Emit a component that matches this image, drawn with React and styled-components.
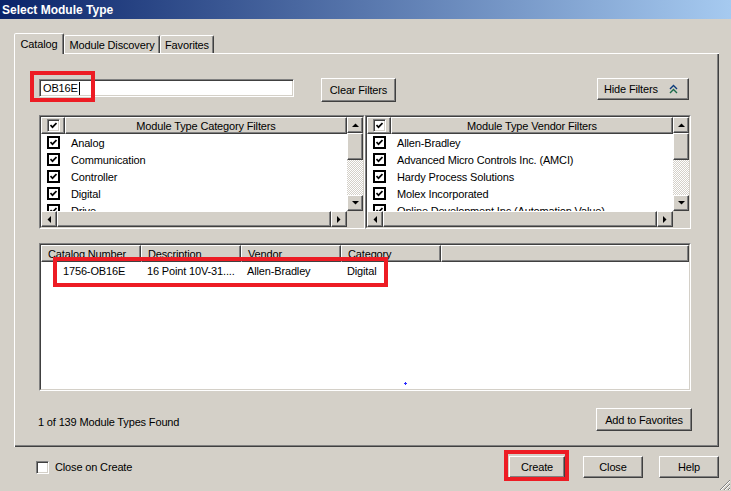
import React from "react";
import styled, { createGlobalStyle, css } from "styled-components";

const FONT = `"Liberation Sans", Arial, sans-serif`;

const Global = createGlobalStyle`
  html, body { margin: 0; padding: 0; background: #d4d0c8; }
  body { font-family: ${FONT}; font-size: 11px; letter-spacing: -0.15px; color: #000; }
  * { box-sizing: border-box; }
`;

const raised = css`
  background: #d4d0c8;
  border: 1px solid;
  border-color: #fff #404040 #404040 #fff;
  box-shadow: inset -1px -1px #808080;
`;

const Window = styled.div`
  position: relative;
  width: 731px;
  height: 491px;
  overflow: hidden;
  display: flex;
  flex-direction: column;
  background: #d4d0c8;
`;

const TitleBar = styled.div`
  height: 19px;
  flex: none;
  display: flex;
  align-items: center;
  padding-left: 2px;
  background: linear-gradient(to right, #0a246a, #a6caf0);
  color: #fff;
  font-weight: bold;
  font-size: 12px;
  letter-spacing: 0;
`;

const Content = styled.div`
  display: flex;
  flex-direction: column;
  padding: 0 12px 0 14px;
`;

const TabStrip = styled.div`
  display: flex;
  align-items: flex-end;
  height: 20px;
  margin-top: 14px;
  position: relative;
  z-index: 1;
`;

const Tab = styled.div`
  width: ${(p) => p.$w}px;
  height: ${(p) => (p.$active ? 21 : 18)}px;
  margin-bottom: ${(p) => (p.$active ? -1 : 0)}px;
  display: flex;
  align-items: center;
  justify-content: center;
  padding-bottom: ${(p) => (p.$active ? 1 : 0)}px;
  background: #d4d0c8;
  border: 1px solid;
  border-bottom: none;
  border-color: #fff #404040 transparent #fff;
  border-radius: 2px 2px 0 0;
  box-shadow: inset -1px 0 #808080;
  white-space: nowrap;
`;

const Panel = styled.div`
  width: 705px;
  height: 394px;
  display: flex;
  flex-direction: column;
  padding: 25px 28px 16px 25px;
  box-shadow: inset 1px 1px #fff, inset -1px -1px #404040, inset -2px -2px #808080;
`;

const TopRow = styled.div`
  display: flex;
  align-items: flex-start;
  height: 24px;
  flex: none;
`;

const SearchWrap = styled.div`
  position: relative;
  width: 255px;
  height: 18px;
  margin-top: 1px;
`;

const SearchBox = styled.div`
  width: 100%;
  height: 100%;
  background: #fff;
  border: 1px solid;
  border-color: #808080 #fff #fff #808080;
  box-shadow: inset 1px 1px #404040, inset -1px -1px #d4d0c8;
  display: flex;
  align-items: center;
  padding-left: 3px;
`;

const Caret = styled.span`
  display: inline-block;
  width: 1px;
  height: 13px;
  background: #000;
  margin-left: 1px;
`;

const RedMark = styled.div`
  position: absolute;
  left: ${(p) => p.$l}px;
  top: ${(p) => p.$t}px;
  width: ${(p) => p.$w}px;
  height: ${(p) => p.$h}px;
  border: 4px solid #ed1c24;
  pointer-events: none;
  z-index: 5;
`;

const Button = styled.div`
  ${raised};
  width: ${(p) => p.$w}px;
  height: ${(p) => p.$h || 22}px;
  display: flex;
  align-items: center;
  justify-content: center;
  flex: none;
  white-space: nowrap;
`;

const ClearButton = styled(Button)`
  margin-left: 27px;
`;

const HideButton = styled(Button)`
  margin-left: auto;
  margin-right: 2px;
  justify-content: space-between;
  padding: 0 10px 0 6px;
`;

const FiltersRow = styled.div`
  display: flex;
  margin-top: 13px;
  height: 114px;
  flex: none;
`;

const Sunken = styled.div`
  width: ${(p) => p.$w}px;
  height: 100%;
  border: 1px solid;
  border-color: #808080 #fff #fff #808080;
`;

const FilterInner = styled.div`
  height: 100%;
  border: 1px solid;
  border-color: #404040 #d4d0c8 #d4d0c8 #404040;
  background: #fff;
  display: grid;
  grid-template-columns: 1fr 16px;
  grid-template-rows: 1fr 16px;
  overflow: hidden;
`;

const ListBody = styled.div`
  overflow: hidden;
  display: flex;
  flex-direction: column;
  min-width: 0;
`;

const ListHeader = styled.div`
  display: flex;
  height: 17px;
  flex: none;
`;

const HeaderCell = styled.div`
  ${raised};
  width: ${(p) => (p.$w ? `${p.$w}px` : "auto")};
  flex: ${(p) => (p.$w ? "none" : "1")};
  display: flex;
  align-items: center;
  justify-content: ${(p) => (p.$center ? "center" : "flex-start")};
  padding-left: ${(p) => (p.$center ? 0 : 6)}px;
  white-space: nowrap;
  overflow: hidden;
`;

const ListRow = styled.div`
  display: flex;
  align-items: center;
  height: 17px;
  flex: none;
  padding-left: 6px;
  gap: 11px;
  white-space: nowrap;
`;

const CheckBox = styled.span`
  width: 13px;
  height: 13px;
  flex: none;
  border: 2px solid #000;
  background: #fff;
  display: grid;
  place-items: center;
`;

const SunkenCheck = styled.span`
  width: 13px;
  height: 13px;
  flex: none;
  background: #fff;
  border: 1px solid;
  border-color: #808080 #fff #fff #808080;
  box-shadow: inset 1px 1px #404040, inset -1px -1px #d4d0c8;
  display: grid;
  place-items: center;
`;

const dither = css`
  background-color: #fff;
  background-image: repeating-conic-gradient(#d4d0c8 0% 25%, #fff 0% 50%);
  background-size: 2px 2px;
`;

const VScroll = styled.div`
  grid-column: 2;
  grid-row: 1;
  display: flex;
  flex-direction: column;
  ${dither};
`;

const HScroll = styled.div`
  grid-column: 1;
  grid-row: 2;
  display: flex;
  background: #d4d0c8;
`;

const Corner = styled.div`
  grid-column: 2;
  grid-row: 2;
  background: #d4d0c8;
`;

const ScrollBtn = styled.div`
  ${raised};
  width: 16px;
  height: 16px;
  flex: none;
  display: grid;
  place-items: center;
`;

const VThumb = styled.div`
  ${raised};
  height: 27px;
  flex: none;
`;

const Track = styled.div`
  flex: 1;
`;

const HThumb = styled.div`
  ${raised};
  flex: 1;
`;

const Results = styled.div`
  margin-top: 14px;
  height: 148px;
  flex: none;
  border: 1px solid;
  border-color: #808080 #fff #fff #808080;
`;

const ResultsInner = styled.div`
  position: relative;
  height: 100%;
  border: 1px solid;
  border-color: #404040 #d4d0c8 #d4d0c8 #404040;
  background: #fff;
  display: flex;
  flex-direction: column;
`;

const ResultRow = styled.div`
  display: flex;
  align-items: center;
  height: 18px;
  flex: none;
`;

const Cell = styled.div`
  width: 100px;
  flex: none;
  padding-left: ${(p) => p.$pad}px;
  white-space: nowrap;
  overflow: hidden;
`;

const BlueDot = styled.span`
  position: absolute;
  left: 363px;
  top: 137px;
  width: 3px;
  height: 3px;
  background: linear-gradient(#2a2aff, #2a2aff) center/3px 1px no-repeat,
    linear-gradient(#2a2aff, #2a2aff) center/1px 3px no-repeat;
`;

const StatusRow = styled.div`
  display: flex;
  align-items: center;
  justify-content: space-between;
  margin: 17px -1px 0 -1px;
  height: 23px;
  flex: none;
`;

const StatusText = styled.span`
  padding-top: 5px;
`;

const BottomRow = styled.div`
  display: flex;
  align-items: center;
  margin-top: 9px;
  height: 22px;
`;

const CheckLabel = styled.label`
  display: flex;
  align-items: center;
  gap: 6px;
  margin-left: 22px;
`;

const CreateWrap = styled.div`
  position: relative;
  margin-left: auto;
`;

const CloseButton = styled(Button)`
  margin-left: 18px;
`;

const HelpButton = styled(Button)`
  margin-left: 16px;
`;

const Grip = styled.svg`
  position: absolute;
  right: 0;
  bottom: 0;
`;

const Check = () => (
  <svg width="7" height="7" viewBox="0 0 7 7">
    <path d="M0.5 3 L2.5 5.2 L6.5 1" fill="none" stroke="#000" strokeWidth="1.7" />
  </svg>
);

const Arrow = ({ dir }) => {
  const pts = {
    up: "0,4 3.5,0.5 7,4",
    down: "0,0 7,0 3.5,3.5",
    left: "4,0 4,7 0.5,3.5",
    right: "0,0 0,7 3.5,3.5",
  }[dir];
  const vertical = dir === "up" || dir === "down";
  return (
    <svg width={vertical ? 7 : 4} height={vertical ? 4 : 7} viewBox={vertical ? "0 0 7 4" : "0 0 4 7"}>
      <polygon points={pts} fill="#000" />
    </svg>
  );
};

const DoubleUp = () => (
  <svg width="9" height="10" viewBox="0 0 9 10">
    <path d="M1 5 L4.5 1.5 L8 5" fill="none" stroke="#0a3a7a" strokeWidth="1.4" />
    <path d="M1 9 L4.5 5.5 L8 9" fill="none" stroke="#1a6a4a" strokeWidth="1.4" />
  </svg>
);

const FilterList = ({ title, items }) => (
  <Sunken $w={326}>
    <FilterInner>
      <ListBody>
        <ListHeader>
          <HeaderCell $w={24} $center>
            <SunkenCheck>
              <Check />
            </SunkenCheck>
          </HeaderCell>
          <HeaderCell $center>{title}</HeaderCell>
        </ListHeader>
        {items.map((it) => (
          <ListRow key={it}>
            <CheckBox>
              <Check />
            </CheckBox>
            <span>{it}</span>
          </ListRow>
        ))}
      </ListBody>
      <VScroll>
        <ScrollBtn>
          <Arrow dir="up" />
        </ScrollBtn>
        <VThumb />
        <Track />
        <ScrollBtn>
          <Arrow dir="down" />
        </ScrollBtn>
      </VScroll>
      <HScroll>
        <ScrollBtn>
          <Arrow dir="left" />
        </ScrollBtn>
        <HThumb />
        <ScrollBtn>
          <Arrow dir="right" />
        </ScrollBtn>
      </HScroll>
      <Corner />
    </FilterInner>
  </Sunken>
);

export default function App() {
  return (
    <>
      <Global />
      <Window>
        <TitleBar>Select Module Type</TitleBar>
        <Content>
          <TabStrip>
            <Tab $w={50} $active>Catalog</Tab>
            <Tab $w={96}>Module Discovery</Tab>
            <Tab $w={54}>Favorites</Tab>
          </TabStrip>
          <Panel>
            <TopRow>
              <SearchWrap>
                <SearchBox>
                  OB16E
                  <Caret />
                </SearchBox>
                <RedMark $l={-9} $t={-8} $w={65} $h={31} />
              </SearchWrap>
              <ClearButton $w={75} $h={24}>Clear Filters</ClearButton>
              <HideButton $w={92} $h={22}>
                <span>Hide Filters</span>
                <DoubleUp />
              </HideButton>
            </TopRow>
            <FiltersRow>
              <FilterList
                title="Module Type Category Filters"
                items={["Analog", "Communication", "Controller", "Digital", "Drive"]}
              />
              <FilterList
                title="Module Type Vendor Filters"
                items={[
                  "Allen-Bradley",
                  "Advanced Micro Controls Inc. (AMCI)",
                  "Hardy Process Solutions",
                  "Molex Incorporated",
                  "Online Development Inc.(Automation Value)",
                ]}
              />
            </FiltersRow>
            <Results>
              <ResultsInner>
                <ListHeader>
                  <HeaderCell $w={100}>Catalog Number</HeaderCell>
                  <HeaderCell $w={100}>Description</HeaderCell>
                  <HeaderCell $w={100}>Vendor</HeaderCell>
                  <HeaderCell $w={100}>Category</HeaderCell>
                  <HeaderCell />
                </ListHeader>
                <ResultRow>
                  <Cell $pad={22}>1756-OB16E</Cell>
                  <Cell $pad={6}>16 Point 10V-31....</Cell>
                  <Cell $pad={6}>Allen-Bradley</Cell>
                  <Cell $pad={6}>Digital</Cell>
                </ResultRow>
                <RedMark $l={12} $t={12} $w={335} $h={30} />
                <BlueDot />
              </ResultsInner>
            </Results>
            <StatusRow>
              <StatusText>1 of 139 Module Types Found</StatusText>
              <Button $w={96} $h={23}>Add to Favorites</Button>
            </StatusRow>
          </Panel>
          <BottomRow>
            <CheckLabel>
              <SunkenCheck />
              <span>Close on Create</span>
            </CheckLabel>
            <CreateWrap>
              <Button $w={56}>Create</Button>
              <RedMark $l={-5} $t={-6} $w={65} $h={31} />
            </CreateWrap>
            <CloseButton $w={60}>Close</CloseButton>
            <HelpButton $w={60}>Help</HelpButton>
          </BottomRow>
        </Content>
        <Grip width="13" height="13" viewBox="0 0 13 13">
          <path d="M12 2 L2 12 M12 6 L6 12 M12 10 L10 12" stroke="#808080" strokeWidth="1" />
          <path d="M12 3 L3 12 M12 7 L7 12 M12 11 L11 12" stroke="#fff" strokeWidth="1" />
        </Grip>
      </Window>
    </>
  );
}
